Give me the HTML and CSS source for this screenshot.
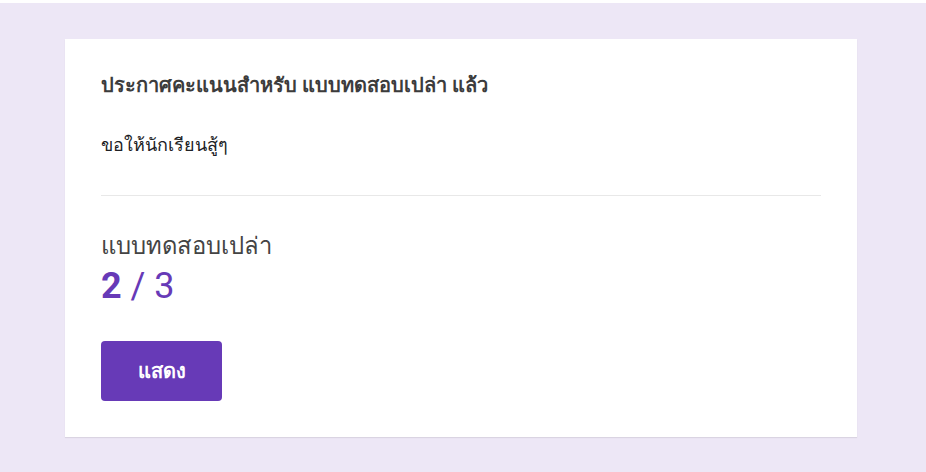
FILE: index.html
```html
<!DOCTYPE html>
<html lang="th">
<head>
<meta charset="utf-8">
<link rel="stylesheet" href="styles.css">
</head>
<body>
<div class="page">
  <div class="card">
    <div class="title">ประกาศคะแนนสำหรับ แบบทดสอบเปล่า แล้ว</div>
    <div class="message">ขอให้นักเรียนสู้ๆ</div>
    <hr class="divider">
    <div class="quiz-name">แบบทดสอบเปล่า</div>
    <div class="score"><span class="score-got">2</span> / 3</div>
    <button class="view-btn">แสดง</button>
  </div>
</div>
</body>
</html>
```
FILE: styles.css
```css
html, body {
  margin: 0;
  padding: 0;
  background: #ffffff;
}
body {
  padding-top: 3px;
  font-family: Roboto, "Noto Sans", "DejaVu Sans", sans-serif;
  color: #333333;
}
.page {
  background: #ede7f6;
  height: 469px;
  box-sizing: border-box;
  padding: 36px 0 0 65px;
}
.card {
  width: 792px;
  height: 398px;
  box-sizing: border-box;
  background: #ffffff;
  box-shadow: 0 1px 1px rgba(0,0,0,0.08);
  padding: 34px 36px 0 36px;
}
.title {
  font-size: 20px;
  font-weight: 700;
  line-height: 24px;
  color: #3c3c3c;
}
.message {
  margin-top: 36px;
  font-size: 18px;
  line-height: 24px;
  color: #202124;
}
.divider {
  border: 0;
  border-top: 1px solid #e8e8e8;
  margin: 38px 0 0 0;
}
.quiz-name {
  margin-top: 34px;
  font-size: 23.8px;
  line-height: 32px;
  color: #444444;
}
.score {
  margin-top: 4px;
  font-size: 36px;
  line-height: 40px;
  color: #673ab7;
}
.score-got {
  font-weight: 700;
}
.view-btn {
  margin-top: 35px;
  width: 121px;
  height: 60px;
  border: 0;
  border-radius: 4px;
  background: #673ab7;
  color: #ffffff;
  font-family: inherit;
  font-size: 20px;
  font-weight: 700;
  cursor: pointer;
}
```
